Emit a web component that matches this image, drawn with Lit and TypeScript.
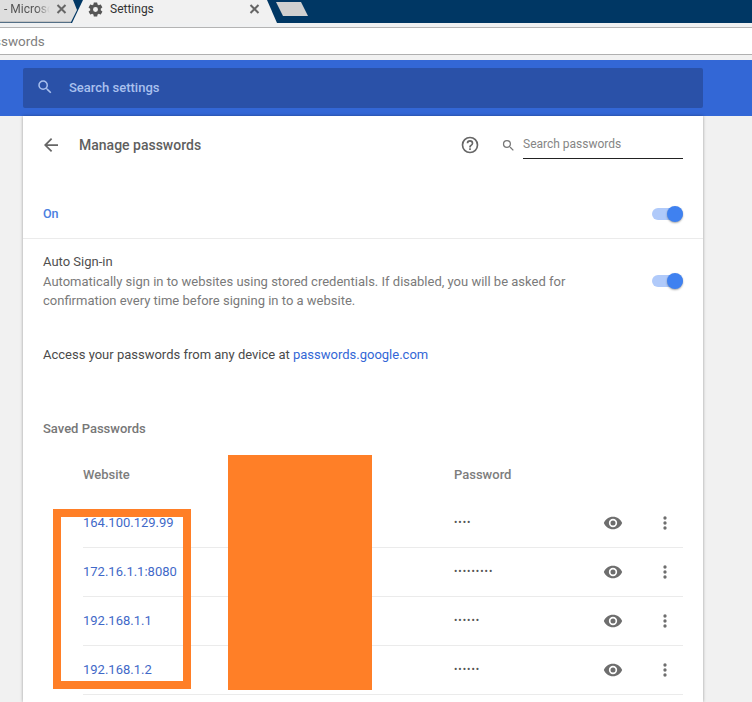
import { LitElement, html, css, svg } from "lit";
import { customElement } from "lit/decorators.js";

const rows = [
  ["164.100.129.99", "••••"],
  ["172.16.1.1:8080", "•••••••••"],
  ["192.168.1.1", "••••••"],
  ["192.168.1.2", "••••••"],
];

const searchIcon = svg`<path d="M15.500 14h-.79l-.28-.27A6.470 6.470 0 0 0 16 9.500 6.500 6.500 0 1 0 9.500 16c1.610 0 3.090-.59 4.230-1.570l.27.28v.79l5 4.990L20.490 19l-4.990-5zm-6 0C7.010 14 5 11.990 5 9.500S7.010 5 9.500 5 14 7.010 14 9.500 11.990 14 9.500 14z"/>`;
const eye = svg`<path d="M12 4.500C7 4.500 2.700 7.600 1 12c1.700 4.400 6 7.500 11 7.500s9.300-3.100 11-7.500c-1.700-4.400-6-7.500-11-7.500zM12 17a5 5 0 1 1 0-10 5 5 0 0 1 0 10zm0-8a3 3 0 1 0 0 6 3 3 0 0 0 0-6z"/>`;
const dots = svg`<path d="M12 8a2 2 0 1 0 0-4 2 2 0 0 0 0 4zm0 2a2 2 0 1 0 0 4 2 2 0 0 0 0-4zm0 6a2 2 0 1 0 0 4 2 2 0 0 0 0-4z"/>`;
const gear = svg`<path d="M19.400 13c.04-.32.100-.66.100-1s-.06-.68-.100-1l2.100-1.650c.2-.15.25-.42.120-.64l-2-3.460c-.12-.22-.39-.3-.61-.22l-2.490 1c-.52-.4-1.080-.73-1.690-.98l-.38-2.650A.49.49 0 0 0 14 2h-4c-.25 0-.46.18-.49.42l-.38 2.650c-.61.25-1.170.59-1.690.98l-2.490-1c-.23-.09-.49 0-.61.22l-2 3.460c-.13.22-.07.49.12.64L4.570 11c-.04.32-.07.65-.07 1s.03.68.07 1l-2.110 1.650c-.19.15-.24.42-.12.64l2 3.460c.12.22.39.3.61.22l2.490-1c.52.4 1.080.73 1.690.98l.38 2.650c.03.24.24.42.49.42h4c.25 0 .46-.18.49-.42l.38-2.650c.61-.25 1.170-.59 1.690-.98l2.490 1c.23.09.49 0 .61-.22l2-3.460c.12-.22.07-.49-.12-.64L19.400 13zM12 15.500a3.500 3.500 0 1 1 0-7 3.500 3.500 0 0 1 0 7z"/>`;

@customElement("app-root")
export class AppRoot extends LitElement {
  static styles = css`
    :host { display: block; width: 752px; height: 702px; overflow: hidden; position: relative; background: #f1f1f1; font-family: Roboto, "Liberation Sans", sans-serif; font-size: 13px; color: #5f5f5f; }
    .tabstrip { position: relative; height: 23px; background: #003764; overflow: hidden; }
    .tabshapes { position: absolute; left: 0; top: 0; }
    .tabtext { position: absolute; top: 0; height: 18px; line-height: 18px; font-size: 12px; color: #555; white-space: nowrap; }
    .old { left: 4px; width: 46px; overflow: hidden; -webkit-mask-image: linear-gradient(90deg, #000 70%, transparent); }
    .cur { left: 110px; color: #333; }
    .tabicon { position: absolute; top: 1px; fill: #555; }
    .x { position: absolute; top: 2px; fill: none; stroke: #666; stroke-width: 2; }
    .tool { height: 4px; background: #f0f1f2; border-bottom: 1px solid #b4b4b4; }
    .addr { height: 26px; background: #fff; border-bottom: 1px solid #b0b0b0; font-size: 13.500px; line-height: 26px; color: #808080; text-indent: -6px; overflow: hidden; }
    .gap { height: 5px; background: #f1f1f1; }
    .head { height: 56px; background: #3367d6; padding: 8px 49px 8px 23px; box-sizing: border-box; }
    .searchbox { height: 40px; background: #2a51a8; border-radius: 2px; display: flex; align-items: center; padding: 0 0 2px 13px; box-sizing: border-box; gap: 15px; color: #a9c0ee; font-weight: 500; font-size: 13px; }
    .searchbox svg { fill: #a9c0ee; }
    .card { margin-left: 23px; width: 680px; height: 586px; background: #fff; box-shadow: 0 0 3px rgba(0,0,0,.35); box-sizing: border-box; }
    .title { height: 58px; padding: 0 20px; display: flex; align-items: center; }
    .back { fill: #666; margin-right: 20px; }
    .title h1 { margin: 0; font-size: 14px; font-weight: 500; color: #5f5f5f; flex: 1; }
    .help { fill: #666; margin-right: 21px; }
    .psearch { display: flex; align-items: center; gap: 7px; }
    .psearch svg { fill: #777; }
    .pinput { width: 160px; height: 27px; line-height: 24px; border-bottom: 1px solid #222; box-sizing: border-box; font-size: 12px; color: #858585; margin-top: 1px; }
    .on { height: 65px; padding: 16px 20px 0; display: flex; align-items: center; justify-content: space-between; border-bottom: 1px solid #ebebeb; box-sizing: border-box; color: #4a80e0; font-weight: 500; font-size: 12.500px; }
    .on span { padding-bottom: 1px; }
    .auto { display: flex; justify-content: space-between; align-items: center; padding: 13px 20px 0; }
    .auto p { margin: 0; line-height: 19.500px; width: 560px; color: #7a7a7a; font-size: 13px; }
    .auto b { display: block; font-weight: 400; color: #4f4f4f; font-size: 13px; }
    .toggle { position: relative; width: 31px; height: 12px; background: #b0cafa; border-radius: 6px; flex: none; }
    .toggle::after { content: ""; position: absolute; right: 0; top: -2px; width: 16px; height: 16px; border-radius: 50%; background: #3f81f0; box-shadow: 0 1px 2px rgba(0,0,0,.35); }
    .access { margin: 0; padding: 34px 20px 0; line-height: 20px; color: #4a4a4a; font-size: 13px; }
    .access span { color: #3367d6; }
    .saved { margin: 0; padding: 54px 20px 0; line-height: 20px; font-weight: 500; font-size: 13px; color: #777; }
    .table { margin: 10px 20px 0 60px; }
    .colhead { display: flex; height: 50px; align-items: center; padding-top: 2px; box-sizing: border-box; font-weight: 500; font-size: 13px; color: #7d7d7d; margin-top: 1px; }
    .site { width: 371px; flex: none; }
    .pwd { flex: 1; }
    .row { display: flex; height: 49px; align-items: center; border-bottom: 1px solid #ebebeb; box-sizing: border-box; }
    .row .site { color: #3f69c8; font-size: 13px; }
    .row .pwd { font-size: 10px; color: #555; letter-spacing: 1px; }
    .eye { fill: #6e6e6e; margin-right: 32px; }
    .dots { fill: #6e6e6e; margin-right: 8px; }
    .frame { position: absolute; left: 53px; top: 509px; width: 138px; height: 180px; border: 8px solid #ff7f27; box-sizing: border-box; }
    .mask { position: absolute; left: 228px; top: 455px; width: 144px; height: 235px; background: #ff7f27; }
  `;

  render() {
    return html`
      <div class="tabstrip">
        <svg class="tabshapes" width="330" height="23" viewBox="0 0 330 23">
          <path d="M0 0H73L77 10L71 22H0Z" fill="#dedede"/>
          <path d="M0 22H71" stroke="#a8a8a8" stroke-width="1"/>
          <path d="M83 0H267L277 23H72Z" fill="#f1f1f1"/>
          <path d="M276 2H301L308 16H283Z" fill="#d0d0d0"/>
        </svg>
        <div class="tabtext old">- Microsoft</div>
        <svg class="x" style="left:56px" width="11" height="14" viewBox="0 0 11 14"><path d="M1.500 3l8 8M9.500 3l-8 8"/></svg>
        <svg class="tabicon" style="left:87px" width="17" height="17" viewBox="0 0 24 24">${gear}</svg>
        <div class="tabtext cur">Settings</div>
        <svg class="x" style="left:249px" width="11" height="14" viewBox="0 0 11 14"><path d="M1.500 3l8 8M9.500 3l-8 8"/></svg>
      </div>
      <div class="tool"></div>
      <div class="addr">sswords</div>
      <div class="gap"></div>
      <div class="head">
        <div class="searchbox">
          <svg width="18" height="18" viewBox="0 0 24 24">${searchIcon}</svg>
          <span>Search settings</span>
        </div>
      </div>
      <div class="card">
        <div class="title">
          <svg class="back" width="16" height="16" viewBox="0 0 16 16"><path d="M16 7H3.800l5.600-5.600L8 0 0 8l8 8 1.400-1.400L3.800 9H16z" transform="translate(1 1) scale(.875)"/></svg>
          <h1>Manage passwords</h1>
          <svg class="help" width="20" height="20" viewBox="0 0 24 24"><path d="M11 18h2v-2h-2v2zm1-16a10 10 0 1 0 0 20 10 10 0 0 0 0-20zm0 18a8 8 0 1 1 0-16 8 8 0 0 1 0 16zm0-14a4 4 0 0 0-4 4h2a2 2 0 1 1 4 0c0 2-3 1.750-3 5h2c0-2.250 3-2.500 3-5a4 4 0 0 0-4-4z"/></svg>
          <div class="psearch">
            <svg width="15" height="15" viewBox="0 0 24 24">${searchIcon}</svg>
            <div class="pinput">Search passwords</div>
          </div>
        </div>
        <div class="on"><span>On</span><div class="toggle"></div></div>
        <div class="auto">
          <p><b>Auto Sign-in</b>Automatically sign in to websites using stored credentials. If disabled, you will be asked for confirmation every time before signing in to a website.</p>
          <div class="toggle"></div>
        </div>
        <p class="access">Access your passwords from any device at <span>passwords.google.com</span></p>
        <p class="saved">Saved Passwords</p>
        <div class="table">
          <div class="colhead"><div class="site">Website</div><div class="pwd">Password</div></div>
          ${rows.map(([s, p]) => html`
            <div class="row">
              <div class="site">${s}</div>
              <div class="pwd">${p}</div>
              <svg class="eye" width="20" height="20" viewBox="0 0 24 24">${eye}</svg>
              <svg class="dots" width="20" height="20" viewBox="0 0 24 24">${dots}</svg>
            </div>`)}
        </div>
      </div>
      <div class="frame"></div>
      <div class="mask"></div>
    `;
  }
}
